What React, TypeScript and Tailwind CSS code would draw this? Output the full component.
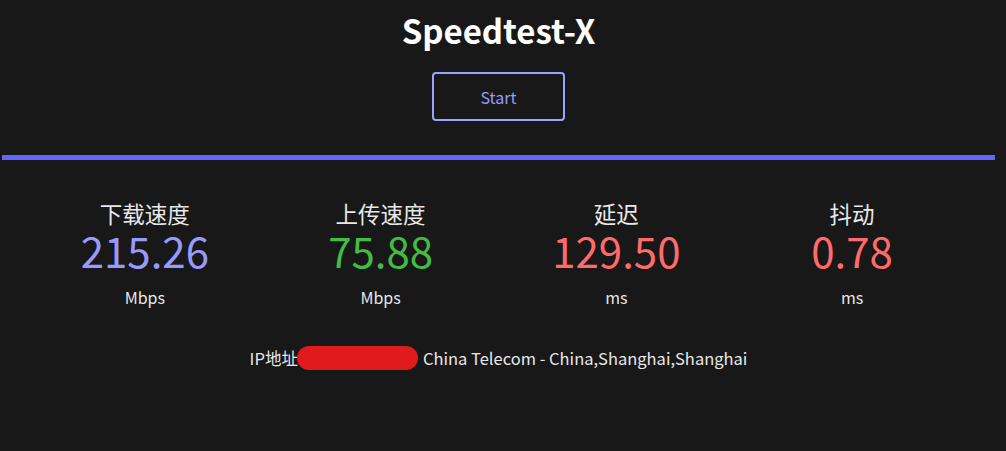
import React from "react";

const stats = [
  { label: "下载速度", value: "215.26", unit: "Mbps", color: "text-[#9999ff]" },
  { label: "上传速度", value: "75.88", unit: "Mbps", color: "text-[#44bb44]" },
  { label: "延迟", value: "129.50", unit: "ms", color: "text-[#ff6b6b]" },
  { label: "抖动", value: "0.78", unit: "ms", color: "text-[#ff6b6b]" },
];

export default function App() {
  return (
    <div
      className="w-[1006px] h-[451px] bg-[#181818] text-[#e8e8e8] pl-[2px] pr-[11px] overflow-hidden"
      style={{ fontFamily: '"Noto Sans CJK SC", "Noto Sans", sans-serif' }}
    >
      <div className="flex flex-col items-center">
        <h1 className="mt-[8px] text-[33px] leading-[44px] font-bold text-white">Speedtest-X</h1>
        <button className="mt-[20px] w-[133px] h-[49px] border-2 border-[#a0a0ff] rounded-[4px] text-[16px] text-[#9b9bff]">
          Start
        </button>
      </div>
      <div className="mt-[34px] h-[5px] bg-[#6464ff]" />
      <div className="mx-[25px] mt-[38px] grid grid-cols-4">
        {stats.map((s) => (
          <div key={s.label} className="flex flex-col items-center">
            <div className="text-[22.5px] leading-[30px]">{s.label}</div>
            <div className={`text-[42px] leading-[44px] ${s.color}`}>{s.value}</div>
            <div className="mt-[14px] text-[16px] leading-[22px]">{s.unit}</div>
          </div>
        ))}
      </div>
      <div className="mt-[38px] flex items-center justify-center text-[16.5px] leading-[22px]">
        <span>IP地址</span>
        <span className="inline-block w-[121px] h-[24px] bg-[#e11b1b] rounded-full -ml-[1px] mr-[5px]" />
        <span>China Telecom - China,Shanghai,Shanghai</span>
      </div>
    </div>
  );
}
